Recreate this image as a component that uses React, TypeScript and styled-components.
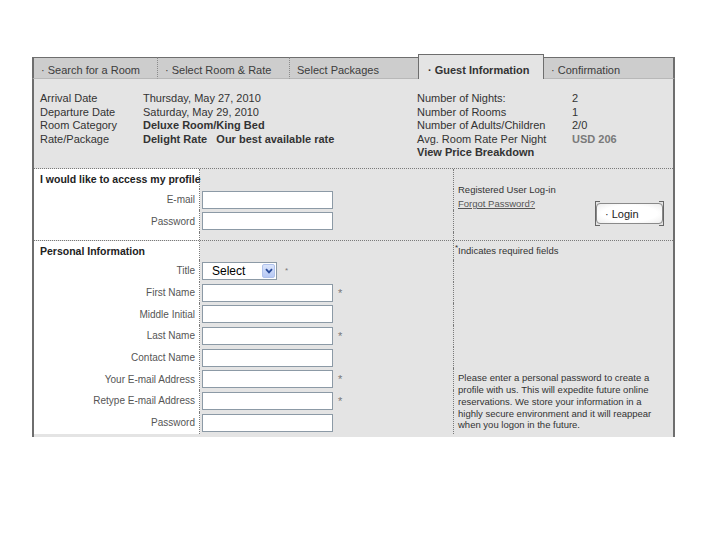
import React from "react";
import styled, { createGlobalStyle } from "styled-components";

const GlobalStyle = createGlobalStyle`
  * { box-sizing: border-box; }
  html, body { margin: 0; background: #fff; }
  body { font-family: "Liberation Sans", Arial, sans-serif; color: #333; }
`;

const Page = styled.div`
  padding: 54px 0 0 32px;
`;

const Frame = styled.div`
  width: 643px;
  height: 383px;
  display: flex;
  flex-direction: column;
  overflow: hidden;
`;

//顶部标签栏
const TabBar = styled.div`
  display: flex;
  align-items: flex-end;
  height: 25px;
`;

const Tab = styled.div<{ $active?: boolean; $w: number; $sep?: boolean; $first?: boolean; $last?: boolean }>`
  width: ${(p) => p.$w}px;
  height: ${(p) => (p.$active ? 25 : 22)}px;
  display: flex;
  align-items: center;
  padding: ${(p) => (p.$active ? "5px 0 0 9px" : "3px 0 0 7px")};
  font-size: 11px;
  font-weight: ${(p) => (p.$active ? "bold" : "normal")};
  color: ${(p) => (p.$active ? "#333" : "#3c3c3c")};
  white-space: nowrap;
  background: ${(p) => (p.$active ? "#e4e4e4" : "#cdcdcd")};
  border-top: 1px solid #6e6e6e;
  border-bottom: ${(p) => (p.$active ? "none" : "1px solid #b8b8b8")};
  border-left: ${(p) => (p.$active ? "1px solid #6e6e6e" : p.$first ? "2px solid #6e6e6e" : "none")};
  border-right: ${(p) =>
    p.$active ? "1px solid #6e6e6e" : p.$last ? "2px solid #6e6e6e" : p.$sep ? "1px dotted #8a8a8a" : "none"};
`;

const Content = styled.div`
  flex: 1;
  background: #e4e4e4;
  border-left: 2px solid #6e6e6e;
  border-right: 2px solid #6e6e6e;
`;

const Summary = styled.div`
  height: 90px;
  display: flex;
  padding: 13px 0 0 6px;
  border-bottom: 1px dotted #7a7a7a;
`;

const InfoTable = styled.div<{ $label: number; $w?: number }>`
  display: grid;
  grid-template-columns: ${(p) => p.$label}px auto;
  align-content: start;
  width: ${(p) => (p.$w ? `${p.$w}px` : "auto")};
  font-size: 11px;
  line-height: 13.6px;
  white-space: nowrap;
`;

const Value = styled.span<{ $bold?: boolean; $muted?: boolean }>`
  font-weight: ${(p) => (p.$bold ? "bold" : "normal")};
  color: ${(p) => (p.$muted ? "#7a7a7a" : "#333")};
`;

const Wide = styled.span`
  grid-column: 1 / -1;
  font-weight: bold;
`;

//表单区块
const Section = styled.div<{ $rows: string; $height?: number }>`
  display: grid;
  grid-template-columns: 166px 254px 219px;
  grid-template-rows: ${(p) => p.$rows};
  height: ${(p) => (p.$height ? `${p.$height}px` : "auto")};
  border-bottom: ${(p) => (p.$height ? "1px dotted #7a7a7a" : "none")};
`;

const LabelCell = styled.div<{ $heading?: boolean }>`
  background: #fff;
  border-right: 1px dotted #7a7a7a;
  display: flex;
  align-items: center;
  justify-content: ${(p) => (p.$heading ? "flex-start" : "flex-end")};
  padding: ${(p) => (p.$heading ? "0 0 0 6px" : "0 4px 0 0")};
  font-size: ${(p) => (p.$heading ? "10.5px" : "10px")};
  font-weight: ${(p) => (p.$heading ? "bold" : "normal")};
  color: ${(p) => (p.$heading ? "#222" : "#555")};
  white-space: nowrap;
`;

const FieldCell = styled.div`
  grid-column: 2;
  border-right: 1px dotted #7a7a7a;
  display: flex;
  align-items: center;
  gap: 5px;
  padding-left: 2px;
`;

const Input = styled.div`
  width: 131px;
  height: 18px;
  background: #fff;
  border: 1px solid #8c9aa6;
`;

const Req = styled.span<{ $small?: boolean }>`
  font-size: ${(p) => (p.$small ? "8px" : "11px")};
  color: #777;
  margin-left: ${(p) => (p.$small ? 3 : 0)}px;
`;

const SelectBox = styled.div`
  width: 75px;
  height: 18px;
  background: #fff;
  border: 1px solid #8c9aa6;
  display: flex;
  align-items: center;
  justify-content: space-between;
  padding: 0 1px 0 9px;
  font-size: 12px;
  color: #000;
`;

const SelectArrow = styled.div`
  width: 13px;
  height: 14px;
  background: linear-gradient(#dbe5fb, #b6c8f4);
  border: 1px solid #b0c2ec;
  border-radius: 2px;
  display: flex;
  align-items: center;
  justify-content: center;
`;

const SideCell = styled.div<{ $rowSpan: string }>`
  grid-column: 3;
  grid-row: ${(p) => p.$rowSpan};
  font-size: 9.5px;
  color: #333;
`;

const LoginSide = styled(SideCell)`
  display: flex;
  justify-content: space-between;
  padding: 14px 10px 0 4px;
  line-height: 14px;
`;

const ForgotLink = styled.a`
  color: #555;
  text-decoration: underline;
`;

const LoginButton = styled.div`
  position: relative;
  margin-top: 20px;
  width: 67px;
  height: 21px;
  background: radial-gradient(ellipse at center, #fff 60%, #ececec 100%);
  border: 1px solid #8a8a8a;
  border-radius: 4px;
  display: flex;
  align-items: center;
  padding-left: 8px;
  font-size: 11px;
  color: #222;
  &::before,
  &::after {
    content: "";
    position: absolute;
    top: -3px;
    bottom: -3px;
    width: 4px;
    border: 1px solid #666;
  }
  &::before {
    left: -2px;
    border-right: none;
  }
  &::after {
    right: -2px;
    border-left: none;
  }
`;

const PersonalSide = styled(SideCell)`
  padding: 1px 0 0 1px;
  line-height: 12px;
`;

const Note = styled.p`
  margin: 115px 0 0 3px;
  line-height: 11.8px;
  font-size: 9.5px;
  color: #333;
`;

const tabs = [
  { label: "· Search for a Room", w: 126, first: true, sep: true },
  { label: "· Select Room & Rate", w: 132, sep: true },
  { label: "Select Packages", w: 128 },
  { label: "· Guest Information", w: 126, active: true },
  { label: "· Confirmation", w: 131, last: true },
];

const personalFields: { label: string; req?: boolean }[] = [
  { label: "First Name", req: true },
  { label: "Middle Initial" },
  { label: "Last Name", req: true },
  { label: "Contact Name" },
  { label: "Your E-mail Address", req: true },
  { label: "Retype E-mail Address", req: true },
  { label: "Password" },
];

function App() {
  return (
    <Page>
      <GlobalStyle />
      <Frame>
        <TabBar>
          {tabs.map((t) => (
            <Tab key={t.label} $w={t.w} $active={t.active} $first={t.first} $last={t.last} $sep={t.sep}>
              {t.label}
            </Tab>
          ))}
        </TabBar>
        <Content>
          <Summary>
            <InfoTable $label={103} $w={377}>
              <span>Arrival Date</span>
              <Value>Thursday, May 27, 2010</Value>
              <span>Departure Date</span>
              <Value>Saturday, May 29, 2010</Value>
              <span>Room Category</span>
              <Value $bold>Deluxe Room/King Bed</Value>
              <span>Rate/Package</span>
              <Value $bold>Delight Rate&nbsp;&nbsp; Our best available rate</Value>
            </InfoTable>
            <InfoTable $label={155}>
              <span>Number of Nights:</span>
              <Value>2</Value>
              <span>Number of Rooms</span>
              <Value>1</Value>
              <span>Number of Adults/Children</span>
              <Value>2/0</Value>
              <span>Avg. Room Rate Per Night</span>
              <Value $bold $muted>USD 206</Value>
              <Wide>View Price Breakdown</Wide>
            </InfoTable>
          </Summary>

          <Section $rows="20px 21px 22px 1fr" $height={72}>
            <LabelCell $heading>I would like to access my profile</LabelCell>
            <FieldCell />
            <LabelCell>E-mail</LabelCell>
            <FieldCell>
              <Input />
            </FieldCell>
            <LabelCell>Password</LabelCell>
            <FieldCell>
              <Input />
            </FieldCell>
            <LabelCell />
            <FieldCell />
            <LoginSide $rowSpan="1 / -1">
              <div>
                Registered User Log-in
                <br />
                <ForgotLink>Forgot Password?</ForgotLink>
              </div>
              <LoginButton>· Login</LoginButton>
            </LoginSide>
          </Section>

          <Section $rows="19px repeat(8, 21.7px) 1fr">
            <LabelCell $heading>Personal Information</LabelCell>
            <FieldCell />
            <LabelCell>Title</LabelCell>
            <FieldCell>
              <SelectBox>
                Select
                <SelectArrow>
                  <svg width="8" height="6" viewBox="0 0 8 6">
                    <path d="M1 1.2 L4 4.4 L7 1.2" fill="none" stroke="#2b4c9a" strokeWidth="1.8" />
                  </svg>
                </SelectArrow>
              </SelectBox>
              <Req $small>*</Req>
            </FieldCell>
            {personalFields.map((f) => (
              <React.Fragment key={f.label}>
                <LabelCell>{f.label}</LabelCell>
                <FieldCell>
                  <Input />
                  {f.req && <Req>*</Req>}
                </FieldCell>
              </React.Fragment>
            ))}
            <LabelCell />
            <FieldCell />
            <PersonalSide $rowSpan="1 / -1">
              <sup>*</sup>Indicates required fields
              <Note>
                Please enter a personal password to create a
                <br />
                profile with us. This will expedite future online
                <br />
                reservations. We store your information in a
                <br />
                highly secure environment and it will reappear
                <br />
                when you logon in the future.
              </Note>
            </PersonalSide>
          </Section>
        </Content>
      </Frame>
    </Page>
  );
}

export default App;
